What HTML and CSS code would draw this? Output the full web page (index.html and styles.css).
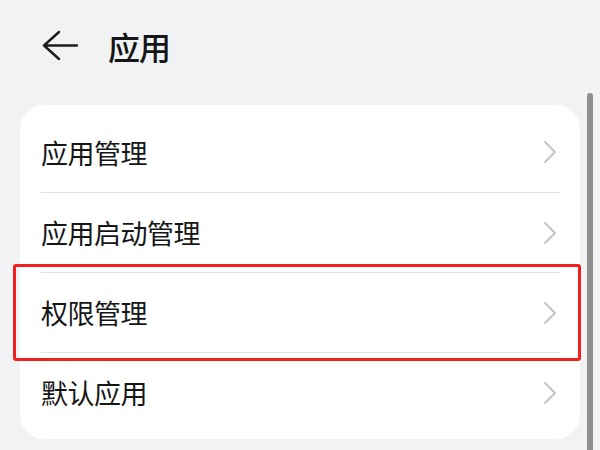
FILE: index.html
```html
<!DOCTYPE html>
<html lang="zh-CN">
<head>
    <meta charset="UTF-8">
    <meta name="viewport" content="width=device-width, initial-scale=1.0">
    <title>应用</title>
    <link rel="stylesheet" href="styles.css">
</head>
<body>
    <div class="page">
        <div class="header">
            <svg class="back" width="36" height="34" viewBox="0 0 36 34">
                <path d="M17 3 L2 16.5 L17 30 M2 16.5 H35" fill="none" stroke="#1c1c1c" stroke-width="2.4" stroke-linecap="round" stroke-linejoin="round"/>
            </svg>
            <h1 class="title">应用</h1>
        </div>

        <div class="card">
            <div class="row">
                <div class="row-inner">
                    <span class="label">应用管理</span>
                    <svg class="chevron" width="14" height="24" viewBox="0 0 14 24"><path d="M2 2 L12 12 L2 22" fill="none" stroke="#c2c2c2" stroke-width="1.8" stroke-linecap="round" stroke-linejoin="round"/></svg>
                </div>
            </div>
            <div class="row">
                <div class="row-inner">
                    <span class="label">应用启动管理</span>
                    <svg class="chevron" width="14" height="24" viewBox="0 0 14 24"><path d="M2 2 L12 12 L2 22" fill="none" stroke="#c2c2c2" stroke-width="1.8" stroke-linecap="round" stroke-linejoin="round"/></svg>
                </div>
            </div>
            <div class="row highlighted">
                <div class="row-inner">
                    <span class="label">权限管理</span>
                    <svg class="chevron" width="14" height="24" viewBox="0 0 14 24"><path d="M2 2 L12 12 L2 22" fill="none" stroke="#c2c2c2" stroke-width="1.8" stroke-linecap="round" stroke-linejoin="round"/></svg>
                </div>
            </div>
            <div class="row">
                <div class="row-inner">
                    <span class="label">默认应用</span>
                    <svg class="chevron" width="14" height="24" viewBox="0 0 14 24"><path d="M2 2 L12 12 L2 22" fill="none" stroke="#c2c2c2" stroke-width="1.8" stroke-linecap="round" stroke-linejoin="round"/></svg>
                </div>
            </div>
        </div>

        <div class="scrollbar"></div>
    </div>
</body>
</html>
```

FILE: styles.css
```css
* {
    margin: 0;
    padding: 0;
    box-sizing: border-box;
}

body {
    background: #f1f2f4;
    font-family: "Noto Sans CJK SC", "Noto Sans", sans-serif;
    color: #161616;
    overflow: hidden;
}

.page {
    position: relative;
    width: 600px;
    height: 450px;
    overflow: hidden;
}

.header {
    height: 105px;
    display: flex;
    align-items: flex-start;
    padding: 29px 0 0 42px;
    gap: 30px;
}

.back {
    display: block;
}

.title {
    font-size: 32px;
    font-weight: 500;
    line-height: 34px;
    letter-spacing: -1px;
}

.card {
    margin: 0 20px;
    background: #fff;
    border-radius: 24px;
    padding: 7px 0;
}

.row {
    position: relative;
    height: 80px;
}

.row-inner {
    height: 100%;
    margin: 0 20px 0 21px;
    display: flex;
    align-items: center;
    justify-content: space-between;
    padding-right: 3px;
}

.row + .row .row-inner {
    border-top: 1px solid #e3e3e3;
}

.label {
    font-size: 27px;
    line-height: 1;
    letter-spacing: -0.5px;
}

.chevron {
    display: block;
}

.highlighted::after {
    content: "";
    position: absolute;
    left: -7px;
    right: -1px;
    top: -8px;
    bottom: -9px;
    border: 3px solid #f0201c;
    border-radius: 3px;
}

.scrollbar {
    position: absolute;
    left: 587px;
    top: 93px;
    width: 6px;
    height: 357px;
    border-radius: 3px 3px 0 0;
    background: #8e8e8e;
}
```
